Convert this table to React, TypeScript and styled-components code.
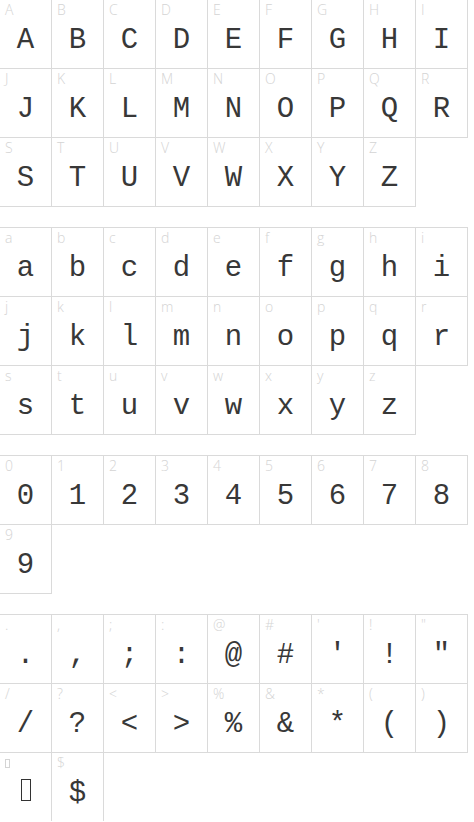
import React from "react";
import styled, { createGlobalStyle } from "styled-components";

const GlobalStyle = createGlobalStyle`
  html, body {
    margin: 0;
    padding: 0;
    background: #ffffff;
  }
  body {
    font-family: "Open Sans", "Liberation Sans", sans-serif;
    overflow: hidden;
  }
`;

const Page = styled.div`
  display: flex;
  flex-direction: column;
  gap: 21px;
  margin: -1px 0 0 -1px;
  width: 470px;
`;

const Section = styled.div`
  display: flex;
  flex-wrap: wrap;
  width: 469px;
`;

const Cell = styled.div`
  box-sizing: border-box;
  width: 53px;
  height: 70px;
  margin: 0 -1px -1px 0;
  border: 1px solid #dadada;
  display: flex;
  flex-direction: column;
  background: #fff;
`;

const Label = styled.div`
  height: 18px;
  padding: 2px 0 0 5px;
  box-sizing: border-box;
  font-family: "Open Sans", "Liberation Sans", sans-serif;
  font-weight: 300;
  font-size: 14px;
  line-height: 16px;
  color: #d4d4d4;
  white-space: pre;
`;

const Glyph = styled.div`
  margin-top: 8px;
  height: 30px;
  text-align: center;
  font-family: "Liberation Mono", "Courier New", monospace;
  font-size: 29px;
  line-height: 30px;
  color: #383838;
  white-space: pre;
`;

const Tofu = styled.span<{ $w: number; $h: number; $color: string }>`
  display: inline-block;
  box-sizing: border-box;
  width: ${(p) => p.$w}px;
  height: ${(p) => p.$h}px;
  border: 1px solid ${(p) => p.$color};
  vertical-align: baseline;
`;

const TOFU = "\uFFFF";

const sections: string[][] = [
  "ABCDEFGHIJKLMNOPQRSTUVWXYZ".split(""),
  "abcdefghijklmnopqrstuvwxyz".split(""),
  "0123456789".split(""),
  [".", ",", ";", ":", "@", "#", "'", "!", '"', "/", "?", "<", ">", "%", "&", "*", "(", ")", TOFU, "$"],
];

function CharCell({ ch }: { ch: string }) {
  const isTofu = ch === TOFU;
  return (
    <Cell>
      <Label>{isTofu ? <Tofu $w={5} $h={9} $color="#d4d4d4" /> : ch}</Label>
      <Glyph>{isTofu ? <Tofu $w={10} $h={22} $color="#333" /> : ch}</Glyph>
    </Cell>
  );
}

export default function App() {
  return (
    <>
      <GlobalStyle />
      <Page>
        {sections.map((chars, i) => (
          <Section key={i}>
            {chars.map((ch, j) => (
              <CharCell key={j} ch={ch} />
            ))}
          </Section>
        ))}
      </Page>
    </>
  );
}
